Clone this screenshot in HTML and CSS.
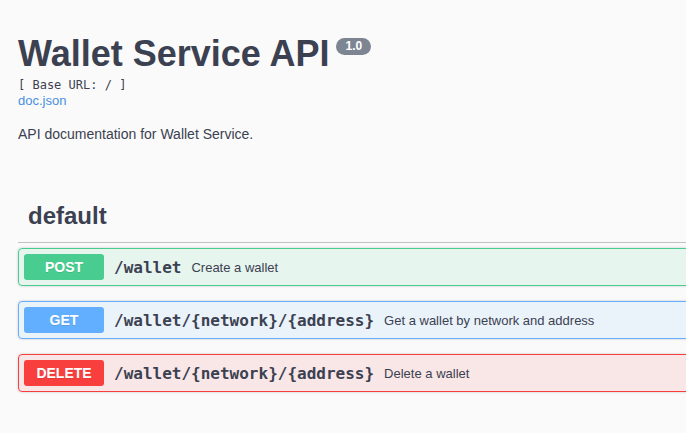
FILE: index.html
```html
<!DOCTYPE html>
<html>
<head>
<meta charset="utf-8">
<link rel="stylesheet" href="styles.css">
</head>
<body>
<div class="page">
  <section class="info">
    <h2 class="title">Wallet Service API<span class="version">1.0</span></h2>
    <pre class="base-url">[ Base URL: / ]</pre>
    <a class="link" href="#">doc.json</a>
    <p class="desc">API documentation for Wallet Service.</p>
  </section>
  <section class="tag-section">
    <h3 class="tag">default</h3>
    <div class="opblock post">
      <span class="method">POST</span>
      <span class="path">/wallet</span>
      <span class="summary">Create a wallet</span>
    </div>
    <div class="opblock get">
      <span class="method">GET</span>
      <span class="path">/wallet/{network}/{address}</span>
      <span class="summary">Get a wallet by network and address</span>
    </div>
    <div class="opblock delete">
      <span class="method">DELETE</span>
      <span class="path">/wallet/{network}/{address}</span>
      <span class="summary">Delete a wallet</span>
    </div>
  </section>
</div>
</body>
</html>
```
FILE: styles.css
```css
html, body {
  margin: 0;
  padding: 0;
  background: #fafafa;
  overflow: hidden;
}
body {
  font-family: "Liberation Sans", Arial, sans-serif;
  color: #3b4151;
}
.page {
  width: 1000px;
  padding: 0 0 0 18px;
}
.info {
  padding-top: 32px;
}
.title {
  margin: 0;
  font-size: 36px;
  line-height: 43px;
  font-weight: 700;
  color: #3b4151;
  display: flex;
  align-items: flex-start;
}
.version {
  display: inline-block;
  margin: 6px 0 0 7px;
  padding: 0 9px;
  height: 17px;
  line-height: 17px;
  border-radius: 9px;
  background: #7d8492;
  color: #fff;
  font-size: 12px;
  font-weight: 700;
}
.base-url {
  margin: 2px 0 0;
  font-family: "DejaVu Sans Mono", monospace;
  font-size: 12px;
  line-height: 16px;
  color: #3b4151;
}
.link {
  display: block;
  font-size: 13px;
  line-height: 16px;
  color: #4990e2;
  text-decoration: none;
}
.desc {
  margin: 17px 0 0;
  font-size: 14px;
  line-height: 17px;
}
.tag-section {
  margin-top: 55px;
}
.tag {
  margin: 0 0 5px;
  padding: 0 10px 8px;
  font-size: 24px;
  line-height: 36px;
  font-weight: 700;
  border-bottom: 1px solid rgba(59,65,81,.3);
}
.opblock {
  display: flex;
  align-items: center;
  height: 26px;
  padding: 5px;
  margin-bottom: 15px;
  border: 1px solid;
  border-radius: 4px;
  box-shadow: 0 0 3px rgba(0,0,0,.19);
}
.method {
  width: 80px;
  height: 26px;
  line-height: 26px;
  text-align: center;
  border-radius: 3px;
  color: #fff;
  font-size: 14px;
  font-weight: 700;
  text-shadow: 0 1px 0 rgba(0,0,0,.1);
}
.path {
  padding: 0 10px;
  font-family: "DejaVu Sans Mono", monospace;
  font-size: 16px;
  font-weight: 700;
  color: #3b4151;
}
.summary {
  font-size: 13px;
  color: #3b4151;
}
.post { background: rgba(73,204,144,.1); border-color: #49cc90; }
.post .method { background: #49cc90; }
.get { background: rgba(97,175,254,.1); border-color: #61affe; }
.get .method { background: #61affe; }
.delete { background: rgba(249,62,62,.1); border-color: #f93e3e; }
.delete .method { background: #f93e3e; }
```
